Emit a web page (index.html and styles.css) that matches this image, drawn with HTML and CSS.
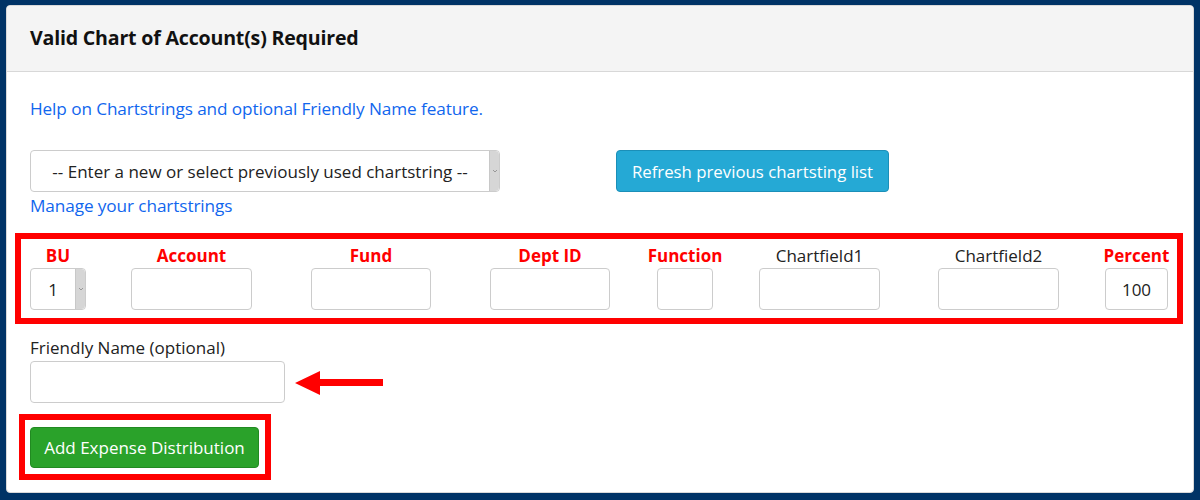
FILE: index.html
```html
<!DOCTYPE html>
<html>
<head>
<meta charset="utf-8">
<link rel="stylesheet" href="styles.css">
</head>
<body>
<div class="frame">
  <div class="card">
    <div class="card-header">Valid Chart of Account(s) Required</div>
    <div class="card-body">
      <a class="link help" href="#">Help on Chartstrings and optional Friendly Name feature.</a>
      <div class="select-row">
        <div class="select big-select">
          <span class="select-text">-- Enter a new or select previously used chartstring --</span>
          <span class="spin"><svg width="6" height="4" viewBox="0 0 6 4"><path d="M1 1 L3 3 L5 1" fill="none" stroke="#888" stroke-width="0.8"/></svg></span>
        </div>
        <button class="btn btn-info">Refresh previous chartsting list</button>
      </div>
      <a class="link manage" href="#">Manage your chartstrings</a>

      <div class="highlight fields">
        <div class="field">
          <label class="req">BU</label>
          <div class="select bu-select">
            <span class="select-text">1</span>
            <span class="spin"><svg width="6" height="4" viewBox="0 0 6 4"><path d="M1 1 L3 3 L5 1" fill="none" stroke="#888" stroke-width="0.8"/></svg></span>
          </div>
        </div>
        <div class="field"><label class="req">Account</label><input class="input w121" type="text"></div>
        <div class="field"><label class="req">Fund</label><input class="input w120" type="text"></div>
        <div class="field"><label class="req">Dept ID</label><input class="input w120" type="text"></div>
        <div class="field"><label class="req">Function</label><input class="input w56" type="text"></div>
        <div class="field"><label>Chartfield1</label><input class="input w121" type="text"></div>
        <div class="field"><label>Chartfield2</label><input class="input w121" type="text"></div>
        <div class="field"><label class="req">Percent</label><input class="input w63 center" type="text" value="100"></div>
      </div>

      <div class="friendly">
        <label class="plain-label">Friendly Name (optional)</label>
        <div class="friendly-row">
          <input class="input w255" type="text">
          <svg class="arrow" width="90" height="28" viewBox="0 0 90 28">
            <polygon points="0,14 25,2 25,10 88,10 88,17 25,17 25,26" fill="#ff0000"/>
          </svg>
        </div>
      </div>

      <div class="highlight add-box">
        <button class="btn btn-success">Add Expense Distribution</button>
      </div>
    </div>
  </div>
</div>
</body>
</html>
```

FILE: styles.css
```css
* { box-sizing: border-box; }
html, body { margin: 0; padding: 0; }
body {
  width: 1200px;
  height: 500px;
  background: #003366;
  font-family: "Open Sans", "Noto Sans", "Liberation Sans", sans-serif;
  overflow: hidden;
}
.frame {
  padding: 5px 6px 6px 6px;
  height: 500px;
}
.card {
  height: 488px;
  background: #fff;
  border: 1px solid #d9d9d9;
  border-radius: 4px;
  overflow: hidden;
}
.card-header {
  height: 66px;
  background: #f4f4f4;
  border-bottom: 1px solid #d8d8d8;
  padding: 18px 0 0 23px;
  font-size: 19.6px;
  font-weight: 700;
  color: #111;
  letter-spacing: -0.2px;
}
.card-body {
  padding: 26px 24px 0 23px;
  display: flex;
  flex-direction: column;
  align-items: flex-start;
}
.link {
  color: #1166ee;
  text-decoration: none;
  font-size: 17.2px;
  letter-spacing: -0.1px;
}
.help { line-height: 22px; }
.select-row {
  margin-top: 30px;
  display: flex;
  align-items: center;
}
.select {
  position: relative;
  display: flex;
  align-items: center;
  height: 42px;
  border: 1px solid #ccc;
  border-radius: 4px;
  background: #fff;
  font-size: 17px;
  color: #222;
}
.big-select {
  width: 470px;
  padding-right: 10px;
}
.select-text {
  flex: 1;
  text-align: center;
}
.spin {
  position: absolute;
  right: 0;
  top: 0;
  bottom: 0;
  width: 10px;
  background: #d6d6d6;
  border-left: 1px solid #c8c8c8;
  border-radius: 0 4px 4px 0;
  display: flex;
  align-items: center;
  justify-content: center;
}
.btn {
  font-family: inherit;
  font-size: 16.8px;
  color: #fff;
  border-radius: 4px;
  height: 42px;
  cursor: pointer;
}
.btn-info {
  margin-left: 116px;
  width: 273px;
  background: #25a9d5;
  border: 1px solid #1b8fb8;
}
.manage {
  margin-top: 2px;
  line-height: 24px;
}
.highlight {
  border: 6px solid #ff0000;
}
.fields {
  margin: 15px -14px 0 -15px;
  align-self: stretch;
  padding: 6px 0 8px 9px;
  display: flex;
  gap: 24px;
}
.field {
  display: flex;
  flex-direction: column;
  align-items: center;
  flex: none;
}
.field:nth-child(1) { width: 56px; }
.field:nth-child(2) { width: 163px; }
.field:nth-child(3) { width: 148px; }
.field:nth-child(4) { width: 162px; }
.field:nth-child(5) { width: 60px; }
.field:nth-child(6) { width: 161px; }
.field:nth-child(7) { width: 149px; }
.field:nth-child(8) { width: 79px; }
.field label {
  font-size: 17px;
  line-height: 21px;
  height: 23px;
  color: #222;
  white-space: nowrap;
}
.field label.req {
  color: #ff0000;
  font-weight: 700;
}
.input {
  height: 42px;
  border: 1px solid #ccc;
  border-radius: 4px;
  background: #fff;
  font-family: inherit;
  font-size: 17px;
  color: #222;
  padding: 0 8px;
}
.center { text-align: center; }
.w56 { width: 56px; }
.w63 { width: 63px; }
.w120 { width: 120px; }
.w121 { width: 121px; }
.w255 { width: 255px; }
.bu-select {
  width: 56px;
  padding-right: 10px;
}
.friendly {
  margin-top: 13px;
  display: flex;
  flex-direction: column;
}
.plain-label {
  font-size: 17px;
  line-height: 22px;
  color: #222;
}
.friendly-row {
  display: flex;
  align-items: center;
  margin-top: 2px;
}
.arrow {
  margin-left: 10px;
  margin-top: 1px;
}
.add-box {
  margin: 11px 0 0 -11px;
  padding: 7px 6px 6px 5px;
}
.btn-success {
  width: 229px;
  height: 41px;
  background: #2aa22a;
  border: 1px solid #218a21;
  font-size: 17px;
}
```
